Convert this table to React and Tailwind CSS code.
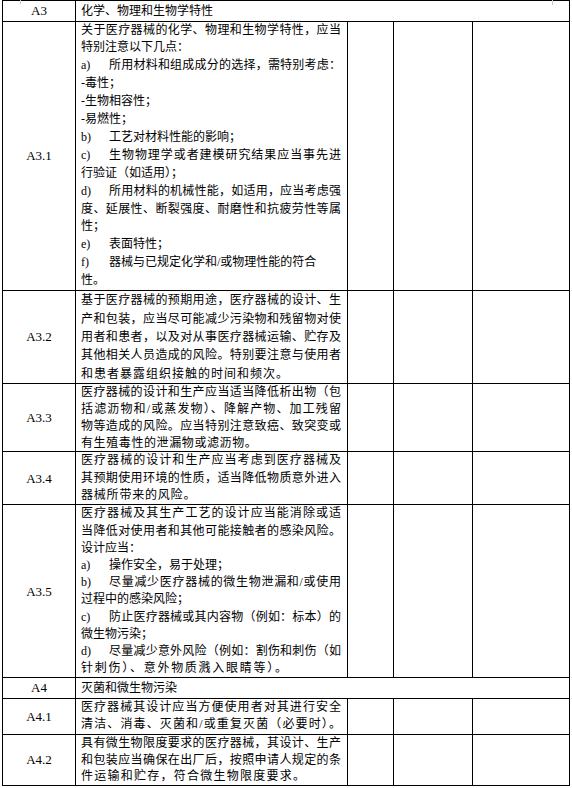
const FONT = "[font-family:'Liberation_Serif','Noto_Sans_CJK_SC',serif]";

// j: justified full-width line, m: list marker such as "a)"
const ROWS = [
  { id: "A3", head: "化学、物理和生物学特性", h: "h-[19px]" },
  {
    id: "A3.1",
    h: "h-[269px]",
    lh: "leading-[17.9px]",
    lines: [
      { t: "关于医疗器械的化学、物理和生物学特性，应当", j: true },
      { t: "特别注意以下几点：" },
      { m: "a)", t: "所用材料和组成成分的选择，需特别考虑：", j: true },
      { t: "-毒性；" },
      { t: "-生物相容性；" },
      { t: "-易燃性；" },
      { m: "b)", t: "工艺对材料性能的影响；" },
      { m: "c)", t: "生物物理学或者建模研究结果应当事先进", j: true },
      { t: "行验证（如适用）；" },
      { m: "d)", t: "所用材料的机械性能，如适用，应当考虑强", j: true },
      { t: "度、延展性、断裂强度、耐磨性和抗疲劳性等属", j: true },
      { t: "性；" },
      { m: "e)", t: "表面特性；" },
      { m: "f)", t: "器械与已规定化学和/或物理性能的符合" },
      { t: "性。" },
    ],
  },
  {
    id: "A3.2",
    h: "h-[93px]",
    lh: "leading-[18.4px]",
    lines: [
      { t: "基于医疗器械的预期用途，医疗器械的设计、生", j: true },
      { t: "产和包装，应当尽可能减少污染物和残留物对使", j: true },
      { t: "用者和患者，以及对从事医疗器械运输、贮存及", j: true },
      { t: "其他相关人员造成的风险。特别要注意与使用者", j: true },
      { t: "和患者暴露组织接触的时间和频次。", s: "tracking-[1px]" },
    ],
  },
  {
    id: "A3.3",
    h: "h-[68px]",
    lh: "leading-[16.8px]",
    lines: [
      { t: "医疗器械的设计和生产应当适当降低析出物（包", j: true },
      { t: "括滤沥物和/或蒸发物）、降解产物、加工残留", j: true },
      { t: "物等造成的风险。应当特别注意致癌、致突变或", j: true },
      { t: "有生殖毒性的泄漏物或滤沥物。", s: "tracking-[0.6px]" },
    ],
  },
  {
    id: "A3.4",
    h: "h-[53px]",
    lh: "leading-[17.3px]",
    lines: [
      { t: "医疗器械的设计和生产应当考虑到医疗器械及", j: true },
      { t: "其预期使用环境的性质，适当降低物质意外进入", j: true },
      { t: "器械所带来的风险。", s: "tracking-[0.8px]" },
    ],
  },
  {
    id: "A3.5",
    h: "h-[173px]",
    lh: "leading-[17.2px]",
    lines: [
      { t: "医疗器械及其生产工艺的设计应当能消除或适", j: true },
      { t: "当降低对使用者和其他可能接触者的感染风险。", j: true },
      { t: "设计应当：" },
      { m: "a)", t: "操作安全，易于处理；" },
      { m: "b)", t: "尽量减少医疗器械的微生物泄漏和/或使用", j: true },
      { t: "过程中的感染风险；" },
      { m: "c)", t: "防止医疗器械或其内容物（例如：标本）的", j: true },
      { t: "微生物污染；" },
      { m: "d)", t: "尽量减少意外风险（例如：割伤和刺伤（如", j: true },
      { t: "针刺伤）、意外物质溅入眼睛等）。", j: true, w: "w-[206px]" },
    ],
  },
  { id: "A4", head: "灭菌和微生物污染", h: "h-[20px]" },
  {
    id: "A4.1",
    h: "h-[36px]",
    lh: "leading-[17.5px]",
    lines: [
      { t: "医疗器械其设计应当方便使用者对其进行安全", j: true },
      { t: "清洁、消毒、灭菌和/或重复灭菌（必要时）。", j: true },
    ],
  },
  {
    id: "A4.2",
    h: "h-[51px]",
    lh: "leading-[16.8px]",
    lines: [
      { t: "具有微生物限度要求的医疗器械，其设计、生产", j: true },
      { t: "和包装应当确保在出厂后，按照申请人规定的条", j: true },
      { t: "件运输和贮存，符合微生物限度要求。", j: true, w: "w-[224px]" },
    ],
  },
];

function Line({ line }) {
  const align = line.j ? "text-justify [text-align-last:justify]" : "text-left";
  const text = (
    <div className={`${align} ${line.s ?? ""} ${line.w ?? ""} ${line.m ? "flex-1" : ""}`}>
      {line.t}
    </div>
  );
  if (!line.m) return text;
  return (
    <div className="flex">
      <span className="w-[28px] shrink-0">{line.m}</span>
      {text}
    </div>
  );
}

export default function App() {
  return (
    <div className={`relative min-h-[788px] bg-white text-black ${FONT}`}>
      <span className="absolute left-[20px] top-0 h-[4px] w-px bg-[#c8c8c8]" />
      <span className="absolute left-[552px] top-0 h-[5px] w-px bg-[#c8c8c8]" />
      <table className="ml-[2px] w-[568px] table-fixed border-collapse pt-[2px]">
        <colgroup>
          <col className="w-[73px]" />
          <col className="w-[272px]" />
          <col className="w-[46px]" />
          <col className="w-[79px]" />
          <col className="w-[97px]" />
        </colgroup>
        <tbody>
          {ROWS.map((row, i) => (
            <tr key={row.id} className={row.h}>
              <td
                className={`border border-black p-0 text-center align-middle text-[13px] ${
                  i === 0 ? "border-t-black" : ""
                }`}
              >
                {row.id}
              </td>
              {row.head ? (
                <td colSpan={4} className="border border-black px-[5px] py-0 align-middle text-[12px] leading-[18px]">
                  {row.head}
                </td>
              ) : (
                <>
                  <td className={`border border-black py-0 pl-[5px] pr-[6px] align-middle text-[12px] ${row.lh}`}>
                    {row.lines.map((line, k) => (
                      <Line key={k} line={line} />
                    ))}
                  </td>
                  <td className="border border-black p-0" />
                  <td className="border border-black p-0" />
                  <td className="border border-black p-0" />
                </>
              )}
            </tr>
          ))}
        </tbody>
      </table>
      <div className="mt-[2px] h-[3px] bg-[#d4d4d4]" />
    </div>
  );
}
